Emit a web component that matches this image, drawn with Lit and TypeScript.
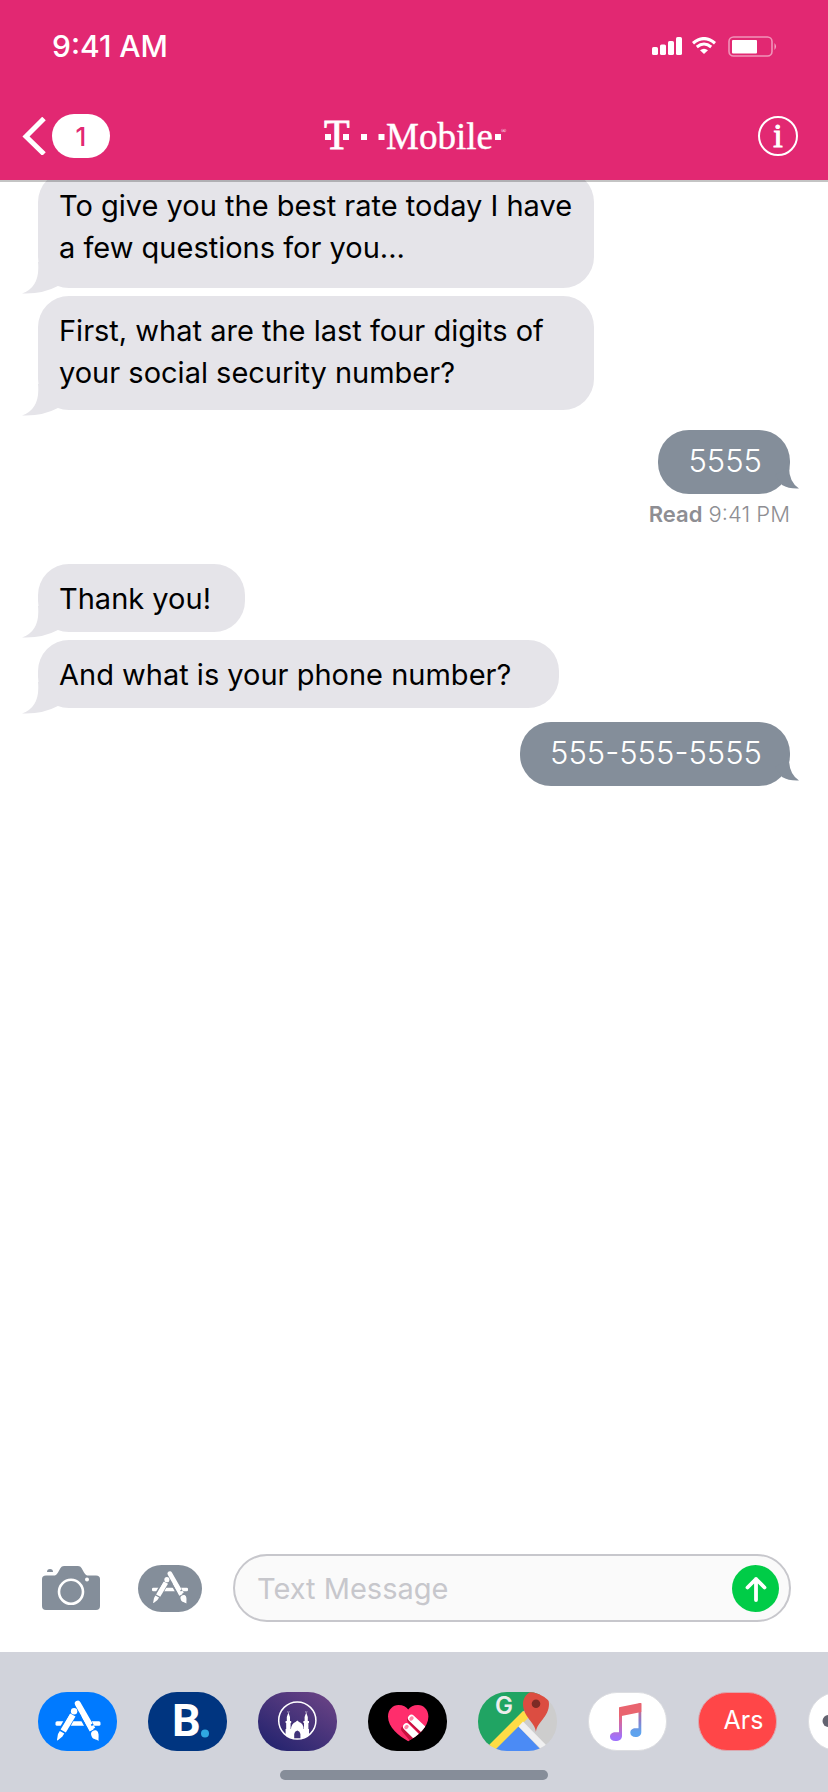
import { LitElement, html, css, svg } from "lit";
import { customElement, property } from "lit/decorators.js";
import { classMap } from "lit/directives/class-map.js";

interface Message {
  from: "them" | "me";
  text: string;
  shape?: "long" | "roomy" | "wide";
  receipt?: string;
}

const MESSAGES: Message[] = [
  { from: "them", text: "To give you the best rate today I have a few questions for you...", shape: "roomy" },
  { from: "them", text: "First, what are the last four digits of your social security number?", shape: "long" },
  { from: "me", text: "5555", receipt: "9:41 PM" },
  { from: "them", text: "Thank you!" },
  { from: "them", text: "And what is your phone number?", shape: "wide" },
  { from: "me", text: "555-555-5555" },
];

/* The pencil-and-brush "A"; `back` is the colour showing in the gaps between the tools. */
const toolsGlyph = (back: string) => svg`
  <g fill="#fff" stroke="none">
    <rect x="17.5" y="29.2" width="45" height="4.6" rx="1.6" />
    <g stroke=${back} stroke-width="2.4">
      <path d="M31.5 20.5 L37 23.7 L27.6 40.8 L22 37.6 Z" />
      <path d="M42 24 L48 20.8 L57 38 L51.2 41 Z" />
    </g>
    <circle cx="36.1" cy="19.2" r="3.2" />
    <path d="M32.3 21.4 L37.5 24.4 L27.8 40.6 L22.6 37.6 Z" />
    <path d="M21.8 38.9 L26.3 41.5 L24.4 44.6 L19.6 48.4 Q18.9 48.6 19 47.8 L20 42 Z" />
    <path d="M37.2 13.2 A3 3 0 0 1 42.4 10.2 L54.6 31.4 L49.4 34.4 Z" />
    <path d="M50.4 35.9 L55.5 32.9 L57.2 35.7 L52 38.7 Z" />
    <path d="M53.2 40.7 C54 38.5 58.5 37 59.9 40 C61.3 43 60.2 46 60.6 49 C58 47 54.8 47.4 53.7 44.5 C53.2 43 52.8 42 53.2 40.7 Z" />
  </g>`;

@customElement("chat-bubble")
class ChatBubble extends LitElement {
  @property() from: "them" | "me" = "them";
  @property() shape = "";

  static styles = css`
    :host {
      display: block;
    }
    .bubble {
      position: relative;
      box-sizing: border-box;
      width: fit-content;
      max-width: 556px;
      border-radius: 31px;
      font-size: 29px;
      line-height: 42px;
    }
    .them {
      background: #e5e4e9;
      color: #000;
      padding: 14px 34px 12px 21px;
    }
    .wide {
      padding-right: 48px;
    }
    .long {
      padding: 14px 16px 16px 21px;
      width: 556px;
    }
    .roomy {
      padding: 14px 16px 19px 21px;
      width: 556px;
    }
    .me {
      background: #848e9a;
      color: #fff;
      padding: 10px 28px 12px 30px;
      margin-left: auto;
      font-size: 31px;
      font-weight: 350;
    }
    .tail {
      position: absolute;
      display: block;
    }
    .them .tail {
      left: -16px;
      bottom: -6px;
    }
    .me .tail {
      right: -9px;
      bottom: 5px;
    }
  `;

  render() {
    const mine = this.from === "me";
    return html`
      <div class=${classMap({
        bubble: true,
        me: mine,
        them: !mine,
        long: this.shape === "long",
        roomy: this.shape === "roomy",
        wide: this.shape === "wide",
      })}>
        <slot></slot>
        ${mine
          ? html`<svg class="tail" width="24" height="22" viewBox="0 0 24 22" aria-hidden="true">
              <path d="M14 0 Q14 15 24 21.5 Q14 22 7 18 L0 8 Z" fill="#848e9a" />
            </svg>`
          : html`<svg class="tail" width="38" height="32" viewBox="0 0 38 32" aria-hidden="true">
              <path d="M16 0 Q18.500 25 0 31.500 Q20 32.500 37 23.500 L34 0 Z" fill="#e5e4e9" />
            </svg>`}
      </div>
    `;
  }
}

@customElement("app-root")
class AppRoot extends LitElement {
  static styles = css`
    :host {
      display: flex;
      flex-direction: column;
      min-height: 100vh;
      background: #fff;
      color: #000;
      font-family: Inter, "Liberation Sans", sans-serif;
      overflow: hidden;
    }
    button {
      border: 0;
      padding: 0;
      margin: 0;
      background: none;
      font: inherit;
      color: inherit;
      flex: none;
    }
    svg {
      display: block;
    }
    .header {
      position: relative;
      z-index: 1;
      background: #e22872;
      color: #fff;
      box-shadow: 0 2px 0 rgba(0, 0, 0, 0.23);
    }
    .status {
      display: flex;
      align-items: center;
      justify-content: space-between;
      height: 92px;
      padding: 0 50px 0 52px;
    }
    .time {
      font-size: 30px;
      font-weight: 500;
    }
    .indicators {
      display: flex;
      align-items: center;
      gap: 10px;
    }
    .nav {
      display: grid;
      grid-template-columns: 1fr auto 1fr;
      align-items: center;
      height: 88px;
      padding: 0 30px 0 22px;
    }
    .back {
      display: flex;
      align-items: center;
      gap: 6px;
      justify-self: start;
    }
    .count {
      display: grid;
      place-items: center;
      width: 58px;
      height: 44px;
      border-radius: 22px;
      background: #fff;
      color: #e22872;
      font-size: 26px;
      font-weight: 500;
    }
    .brand {
      font-family: "Liberation Serif", serif;
    }
    .info {
      justify-self: end;
      display: grid;
      place-items: center;
      box-sizing: border-box;
      width: 40px;
      height: 40px;
      border: 2px solid #fff;
      border-radius: 50%;
      font-family: "Liberation Serif", serif;
      font-size: 34px;
      line-height: 36px;
      -webkit-text-stroke: 1px #fff;
    }
    .chat {
      flex: 1;
      display: flex;
      flex-direction: column;
      gap: 8px;
      margin: -9px 38px 0;
    }
    .reply {
      margin-top: 12px;
    }
    .last {
      margin-top: 6px;
    }
    .receipt {
      margin: 0 0 30px;
      text-align: right;
      font-size: 22px;
      line-height: 24px;
      font-weight: 300;
      color: #8e8e93;
    }
    .receipt b {
      font-weight: 600;
    }
    .composer {
      display: flex;
      align-items: center;
      padding: 30px 37px 30px 42px;
    }
    .camera {
      margin-right: 38px;
    }
    .apps {
      margin-right: 31px;
    }
    .field {
      flex: 1;
      display: flex;
      align-items: center;
      box-sizing: border-box;
      height: 68px;
      padding: 0 10px 0 22px;
      border: 2px solid #c7c7cc;
      border-radius: 34px;
      background: #fafafa;
    }
    .entry {
      flex: 1;
      min-width: 0;
      border: 0;
      outline: 0;
      padding: 0;
      background: none;
      font-family: inherit;
      font-size: 29px;
      color: #000;
    }
    .entry::placeholder {
      color: #c7c7cc;
      opacity: 1;
    }
    .tray {
      background: #d1d3db;
      padding-top: 40px;
    }
    .strip {
      display: flex;
      gap: 31px;
      padding-left: 38px;
      overflow: hidden;
    }
    .app {
      box-sizing: border-box;
      width: 79px;
      height: 59px;
      border-radius: 29px;
      overflow: hidden;
    }
    .light {
      border: 1px solid #dcdde1;
      background: #fff;
    }
    .ars {
      border: 1px solid #dba9b1;
      background: #ff4648;
      color: #fff;
      font-size: 25px;
      line-height: 50px;
      padding: 0 0 4px 12px;
    }
    .home {
      width: 268px;
      height: 10px;
      margin: 19px auto 12px;
      border-radius: 5px;
      background: #868d99;
    }
  `;

  private header() {
    return html`
      <header class="header">
        <div class="status">
          <span class="time">9:41 AM</span>
          <div class="indicators">
            <svg width="30" height="20" viewBox="0 0 30 20" fill="#fff" role="img" aria-label="Signal">
              <rect x="0" y="11" width="6" height="8" rx="1.6" />
              <rect x="8" y="8.500" width="6" height="10.500" rx="1.600" />
              <rect x="16" y="5" width="6" height="14" rx="1.600" />
              <rect x="24" y="1" width="6" height="18" rx="1.600" />
            </svg>
            <svg width="24" height="18" viewBox="0 0 24 18" fill="none" stroke="#fff" role="img" aria-label="Wi-Fi">
              <path d="M1 6.200 Q12 -3 23 6.200" stroke-width="3.200" />
              <path d="M4.800 10 Q12 4 19.200 10" stroke-width="3" />
              <path d="M12 17 L8 13.200 Q12 10.200 16 13.200 Z" fill="#fff" stroke="none" />
            </svg>
            <svg width="52" height="22" viewBox="0 0 52 22" role="img" aria-label="Battery">
              <rect x="3" y="2" width="43" height="19" rx="4.500" fill="none" stroke="#fff" stroke-opacity=".5" stroke-width="1.600" />
              <rect x="6" y="5" width="25" height="13.500" rx="1" fill="#fff" />
              <path d="M48.500 8 Q51.500 11.500 48.500 15 Z" fill="#fff" fill-opacity=".6" />
            </svg>
          </div>
        </div>
        <nav class="nav">
          <button class="back" aria-label="Back, 1 unread">
            <svg width="24" height="38" viewBox="0 0 24 38" fill="none" stroke="#fff" stroke-width="5">
              <path d="M22 1.500 L4 19.500 L22 37" />
            </svg>
            <span class="count">1</span>
          </button>
          <svg class="brand" width="200" height="56" viewBox="-14 -8 200 56" fill="#fff">
            <text x="0" y="33" font-size="42" stroke="#fff" stroke-width=".8">T</text>
            <path d="M1 18h6v6h-6z M19 18h6v6h-6z M37 18h6v6h-6z M54.500 18h6v6h-6z M171 18h6v6h-6z" />
            <text x="62" y="33" font-size="37" stroke="#fff" stroke-width=".4">Mobile</text>
            <text x="177" y="17" font-size="7">®</text>
          </svg>
          <button class="info" aria-label="Details">i</button>
        </nav>
      </header>
    `;
  }

  private chat() {
    return html`
      <main class="chat">
        ${MESSAGES.map(
          (m, i) => html`
            <chat-bubble
              class=${classMap({ reply: m.from === "me" && !!m.receipt, last: i === MESSAGES.length - 1 })}
              .from=${m.from}
              .shape=${m.shape ?? ""}
            >${m.text}</chat-bubble>
            ${m.receipt ? html`<div class="receipt"><b>Read</b> ${m.receipt}</div>` : ""}
          `
        )}
      </main>
    `;
  }

  private composer() {
    return html`
      <form class="composer">
        <button class="camera" type="button" aria-label="Camera">
          <svg width="58" height="44" viewBox="0 0 58 44">
            <path d="M4 9.500 H13 Q15 8.500 16 6.500 L18.500 2 Q19.500 0 22 0 H36 Q38.500 0 39.500 2 L42 6.500 Q43 8.500 45 9.500 H54 Q58 9.500 58 13 V40 Q58 44 54 44 H4 Q0 44 0 40 V13 Q0 9.500 4 9.500 Z" fill="#848e9a" />
            <path d="M5 6 Q5 3 8 3 Q11 3 11 6 Z" fill="#848e9a" />
            <circle cx="29" cy="25.800" r="12" fill="none" stroke="#fff" stroke-width="2.600" />
            <circle cx="45" cy="13.500" r="2" fill="#fff" />
          </svg>
        </button>
        <button class="apps" type="button" aria-label="Apps">
          <svg width="64" height="47" viewBox="0 0 64 47">
            <rect width="64" height="47" rx="23.500" fill="#848e9a" />
            <g transform="translate(0 -0.700) scale(.8)">${toolsGlyph("#848e9a")}</g>
          </svg>
        </button>
        <div class="field">
          <input class="entry" type="text" placeholder="Text Message" aria-label="Text Message" />
          <button type="button" aria-label="Send">
            <svg width="47" height="47" viewBox="0 0 47 47">
              <circle cx="23.500" cy="23.500" r="23.500" fill="#00cc47" />
              <path d="M24 35 V14 M15.500 22.500 L24 14 L32.500 22.500" fill="none" stroke="#fff" stroke-width="3.800" stroke-linecap="round" stroke-linejoin="round" />
            </svg>
          </button>
        </div>
      </form>
    `;
  }

  private tray() {
    return html`
      <footer class="tray">
        <div class="strip">
          <button class="app" aria-label="App Store">
            <svg width="79" height="59" viewBox="0 0 79 59">
              <rect width="79" height="59" fill="#007aff" />
              ${toolsGlyph("#007aff")}
            </svg>
          </button>
          <button class="app" aria-label="Booking">
            <svg width="79" height="59" viewBox="0 0 79 59">
              <rect width="79" height="59" fill="#003580" />
              <text x="24" y="44" font-family="Roboto, sans-serif" font-weight="700" font-size="45" fill="#fff">B</text>
              <circle cx="57" cy="41.500" r="4" fill="#2fa8e1" />
            </svg>
          </button>
          <button class="app" aria-label="Muslim Pro">
            <svg width="79" height="59" viewBox="0 0 79 59">
              <defs>
                <linearGradient id="dusk" x1="0.100" y1="0.900" x2="0.850" y2="0">
                  <stop offset="0" stop-color="#25246f" />
                  <stop offset="1" stop-color="#6a4385" />
                </linearGradient>
                <clipPath id="moon"><circle cx="39.300" cy="28.500" r="18.500" /></clipPath>
              </defs>
              <rect width="79" height="59" fill="url(#dusk)" />
              <circle cx="39.300" cy="28.500" r="18.600" fill="none" stroke="#fff" stroke-width="1.500" />
              <g fill="#fff" clip-path="url(#moon)">
                <path d="M30.400 20.500 L32 25 V29 H33.200 V31 H32.600 V49 H28.200 V31 H27.600 V29 H28.800 V25 Z" />
                <path d="M48.200 20.500 L49.800 25 V29 H51 V31 H50.400 V49 H46 V31 H45.400 V29 H46.600 V25 Z" />
                <path d="M27.600 37 h23.400 v12 h-23.400 z" />
                <path d="M33 37 Q33.500 31.500 37.500 30 L39.300 28.500 L41.100 30 Q45.500 31.500 45.600 37 Z" />
              </g>
              <path d="M36.200 46.300 V42 Q36.500 39.300 39.300 38.500 Q42.100 39.300 42.400 42 V46.300 Z" fill="#40337a" />
              <path d="M29.200 19.800 q1.200 .8 2.400 0 M47 19.800 q1.200 .8 2.400 0" stroke="#fff" stroke-width=".6" fill="none" />
            </svg>
          </button>
          <button class="app" aria-label="Digital Touch">
            <svg width="79" height="59" viewBox="0 0 79 59">
              <defs>
                <clipPath id="heart">
                  <path d="M40.200 49.200 C31 44 20 35.500 20 24.500 C20 17.500 25 13 30.500 13 C35 13 38.500 15 40.200 17.500 C42 15 45.500 13 50 13 C55.500 13 60.400 17.500 60.400 24.500 C60.400 35.500 49.500 44 40.200 49.200 Z" />
                </clipPath>
              </defs>
              <rect width="79" height="59" fill="#000" />
              <g clip-path="url(#heart)">
                <rect width="79" height="59" fill="#ff2d6c" />
                <path d="M37 37 L48 50 M43 28 L58 43" stroke="#c9103f" stroke-width="7.500" stroke-linecap="round" />
                <path d="M38.500 34.800 L53 49 M43.500 26.200 L60 42" stroke="#fff" stroke-width="7" stroke-linecap="round" />
              </g>
              <ellipse cx="38.500" cy="35" rx="1.900" ry="2.400" transform="rotate(45 38.500 35)" fill="#ff86a6" />
              <ellipse cx="43.500" cy="26.500" rx="1.900" ry="2.400" transform="rotate(45 43.500 26.500)" fill="#ff86a6" />
            </svg>
          </button>
          <button class="app" aria-label="Google Maps">
            <svg width="79" height="59" viewBox="0 0 79 59">
              <rect width="79" height="59" fill="#cdcdcd" />
              <path d="M0 0 H64 L10 56 V59 H0 Z" fill="#20a463" />
              <path d="M45 19 L52 24 L17 59 H8 V56 Z" fill="#fedc46" />
              <path d="M40.500 34.500 L64 59 H16 Z" fill="#4b8bf5" />
              <path d="M45 29.500 L71 56 L66 60 L40.500 34.500 Z" fill="#f0f0f1" />
              <text x="17" y="22" font-family="Inter, sans-serif" font-weight="600" font-size="24" fill="#ededed">G</text>
              <path d="M58 40 C57 30 45 25 45 12 C45 5 50 -1 58 -1 C66 -1 71 5 71 12 C71 25 59 30 58 40 Z" fill="#dc4d41" />
              <circle cx="58" cy="11.800" r="4.300" fill="#7d2b25" />
            </svg>
          </button>
          <button class="app light" aria-label="Music">
            <svg width="77" height="57" viewBox="0 0 77 57">
              <defs>
                <linearGradient id="warm" x1="0" y1="0" x2="0" y2="1">
                  <stop offset=".2" stop-color="#f0646e" />
                  <stop offset=".9" stop-color="#a071fb" />
                </linearGradient>
                <linearGradient id="cool" x1="0" y1="0" x2="0" y2="1">
                  <stop offset=".1" stop-color="#e0637c" />
                  <stop offset=".5" stop-color="#8b7cc8" />
                  <stop offset=".85" stop-color="#5fa3ee" />
                </linearGradient>
              </defs>
              <path d="M30 14.500 L33 14 V43 C33 46 30.500 48 26.500 48 C23 48 21 46.200 21 43.800 C21 41 23.300 39.300 26.500 39.300 H30 Z" fill="url(#warm)" />
              <path d="M49.500 10.500 L52.300 10 V39 C52.300 42.500 50 44 46.800 44 C43.300 44 41.300 42.300 41.300 39.800 C41.300 37 43.500 35.300 46.500 35.300 H49.500 Z" fill="url(#cool)" />
              <path d="M30 15.300 Q30 14.200 31.200 14 L51 10 Q52.300 9.800 52.300 11 V19 L30 23.500 Z" fill="#e9646f" />
            </svg>
          </button>
          <button class="app ars" aria-label="Ars">Ars</button>
          <button class="app light" aria-label="More">
            <svg width="77" height="57" viewBox="0 0 77 57" fill="#636370">
              <circle cx="19.500" cy="28" r="6" />
              <circle cx="38.500" cy="28" r="6" />
              <circle cx="57.500" cy="28" r="6" />
            </svg>
          </button>
        </div>
        <div class="home"></div>
      </footer>
    `;
  }

  render() {
    return html`${this.header()}${this.chat()}${this.composer()}${this.tray()}`;
  }
}
